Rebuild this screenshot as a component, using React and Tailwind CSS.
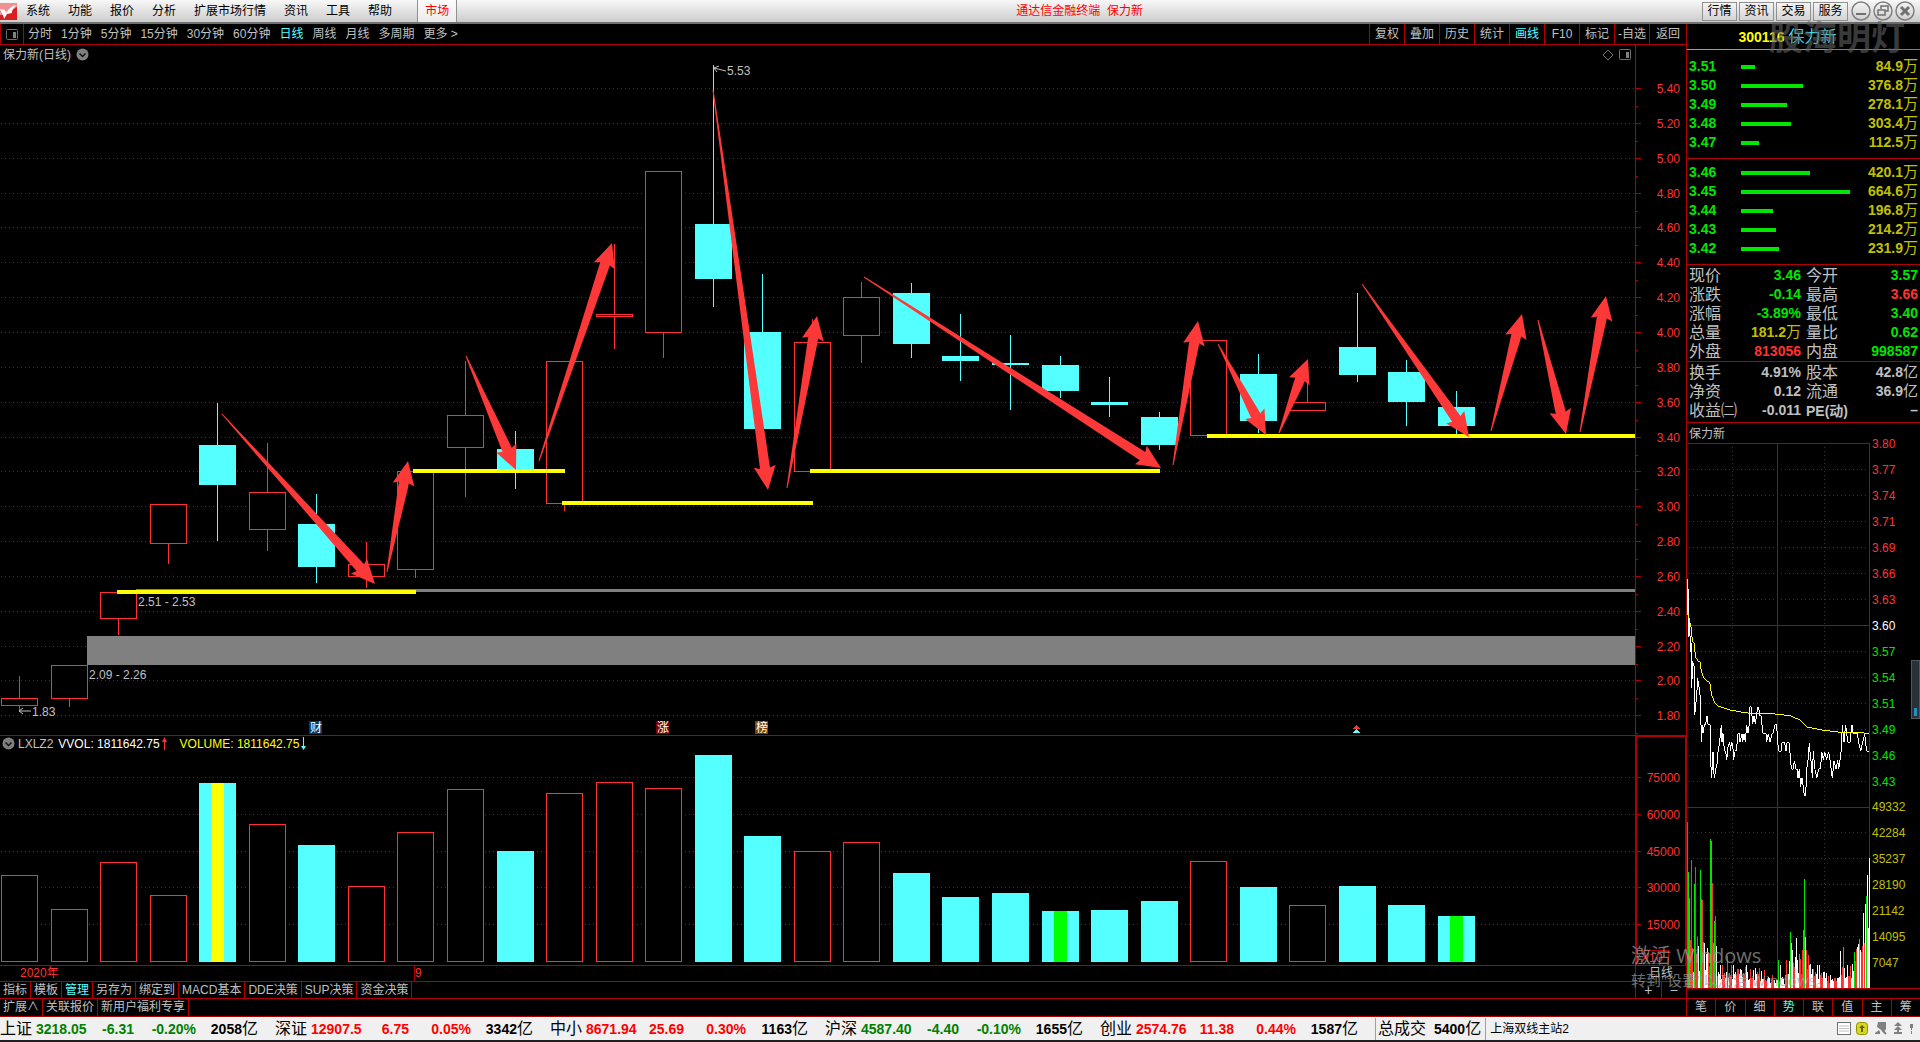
import clsx from 'clsx';

const RED = '#ff3232';
const LINE = '#b00000';
const CYAN = '#54ffff';

const menuItems = ['系统', '功能', '报价', '分析', '扩展市场行情', '资讯', '工具', '帮助'];
const periods = ['分时', '1分钟', '5分钟', '15分钟', '30分钟', '60分钟', '日线', '周线', '月线', '多周期', '更多 >'];
const chartTools = ['复权', '叠加', '历史', '统计', '画线', 'F10', '标记', '-自选', '返回'];
const windowLinks = ['行情', '资讯', '交易', '服务'];
const sideTabs = ['笔', '价', '细', '势', '联', '值', '主', '筹'];
const indicatorTabs = ['指标', '模板', '管理', '另存为', '绑定到', 'MACD基本', 'DDE决策', 'SUP决策', '资金决策'];
const extraTabs = ['扩展∧', '关联报价', '新用户福利专享'];

const asks = [
  ['3.51', 84.9],
  ['3.50', 376.8],
  ['3.49', 278.1],
  ['3.48', 303.4],
  ['3.47', 112.5],
];
const bids = [
  ['3.46', 420.1],
  ['3.45', 664.6],
  ['3.44', 196.8],
  ['3.43', 214.2],
  ['3.42', 231.9],
];

const GREEN_TXT = 'text-[#00e600]';
const RED_TXT = 'text-[#ff3232]';
const GOLD_TXT = 'text-[#c0c000]';
const GREY_TXT = 'text-[#c0c0c0]';

const quoteRows = [
  ['现价', '3.46', GREEN_TXT, '今开', '3.57', GREEN_TXT],
  ['涨跌', '-0.14', GREEN_TXT, '最高', '3.66', RED_TXT],
  ['涨幅', '-3.89%', GREEN_TXT, '最低', '3.40', GREEN_TXT],
  ['总量', '181.2万', GOLD_TXT, '量比', '0.62', GREEN_TXT],
  ['外盘', '813056', RED_TXT, '内盘', '998587', GREEN_TXT],
];
const financeRows = [
  ['换手', '4.91%', GREY_TXT, '股本', '42.8亿', GREY_TXT],
  ['净资', '0.12', GREY_TXT, '流通', '36.9亿', GREY_TXT],
  ['收益㈡', '-0.011', GREY_TXT, 'PE(动)', '–', GREY_TXT],
];

const indexes = [
  ['上证', '3218.05', '-6.31', '-0.20%', '2058', false],
  ['深证', '12907.5', '6.75', '0.05%', '3342', true],
  ['中小', '8671.94', '25.69', '0.30%', '1163', true],
  ['沪深', '4587.40', '-4.40', '-0.10%', '1655', false],
  ['创业', '2574.76', '11.38', '0.44%', '1587', true],
];

// [up, bodyTop, bodyBottom, high, low, volumeTop]
const candles = [
  [1, 698, 705, 676, 710, 875],
  [1, 665, 698, 665, 707, 909],
  [1, 592, 618, 592, 635, 862],
  [1, 504, 543, 504, 564, 895],
  [0, 445, 485, 403, 541, 783],
  [1, 492, 529, 443, 551, 824],
  [0, 524, 567, 494, 583, 845],
  [1, 564, 576, 542, 588, 886],
  [1, 471, 569, 471, 578, 832],
  [1, 415, 447, 361, 497, 789],
  [0, 449, 471, 431, 489, 851],
  [1, 361, 503, 361, 511, 793],
  [1, 314, 316, 244, 349, 782],
  [1, 171, 332, 171, 358, 788],
  [0, 224, 279, 65, 307, 755],
  [0, 332, 429, 274, 429, 836],
  [1, 342, 471, 319, 471, 851],
  [1, 297, 335, 282, 363, 842],
  [0, 293, 344, 283, 358, 873],
  [0, 356, 361, 314, 381, 897],
  [0, 363, 365, 335, 410, 893],
  [0, 365, 391, 356, 398, 911],
  [0, 402, 405, 377, 417, 910],
  [0, 417, 445, 412, 450, 901],
  [1, 340, 435, 340, 435, 861],
  [0, 374, 421, 354, 433, 887],
  [1, 402, 410, 380, 410, 905],
  [0, 347, 375, 293, 382, 886],
  [0, 372, 402, 360, 426, 905],
  [0, 407, 426, 391, 434, 916],
];
const candleX = (i) => Math.round(19 + i * 49.55);

const volumeMarks = { 4: '#ffff00', 21: '#00ff00', 29: '#00ff00' };

const supportLines = [
  [117, 416, 592],
  [413, 565, 471],
  [562, 813, 503],
  [810, 1160, 471],
  [1207, 1635, 436],
];

const arrows = [
  [222, 414, 375, 584],
  [387, 572, 408, 461],
  [466, 356, 516, 470],
  [539, 461, 612, 243],
  [713, 90, 768, 490],
  [787, 488, 817, 316],
  [864, 277, 1161, 468],
  [1173, 465, 1198, 321],
  [1218, 344, 1266, 435],
  [1279, 433, 1308, 359],
  [1362, 284, 1469, 437],
  [1491, 431, 1522, 314],
  [1538, 320, 1566, 434],
  [1580, 432, 1606, 296],
];

// thin tail that widens into a barbed head
const arrowPoints = ([x1, y1, x2, y2]) => {
  const len = Math.hypot(x2 - x1, y2 - y1);
  const ux = (x2 - x1) / len;
  const uy = (y2 - y1) / len;
  const at = (back, side) => `${(x2 - ux * back - uy * side).toFixed(1)},${(y2 - uy * back + ux * side).toFixed(1)}`;
  return [at(len, 0.5), at(26, 5), at(22, 5), at(24, 11), at(0, 0), at(24, -11), at(22, -5), at(26, -5), at(len, -0.5)].join(' ');
};

const avgLine =
  '142,545 145,550 148,570 153,590 157,632 163,640 166,680 172,690 180,697 184,725 190,740 197,750 207,757 210,762 215,795 225,820 235,829 270,840 320,849 395,851 450,857 480,870 500,891 545,900 600,907 650,908 688,910';
const priceLine =
  '142,448 142,555 145,478 146,620 149,570 151,665 154,640 155,775 158,692 160,705 163,710 164,856 167,825 170,800 173,745 176,770 179,775 182,830 184,936 187,885 189,910 193,885 197,883 201,857 204,882 210,884 213,1010 215,1045 218,970 220,965 221,1018 223,1045 227,1018 232,1000 234,965 239,936 244,885 246,936 249,910 251,940 254,963 257,965 260,990 264,950 269,936 272,962 274,938 278,940 281,990 284,965 290,960 293,912 300,912 300,936 306,912 308,936 312,912 316,936 320,885 324,910 328,882 330,830 334,830 338,882 342,858 346,882 350,856 353,830 356,832 360,858 364,858 368,910 378,912 380,936 385,912 390,936 396,912 400,908 404,885 410,884 413,936 416,964 424,964 426,938 434,938 438,964 440,938 448,938 452,1000 455,1018 460,1018 463,992 468,1018 472,1018 474,1044 478,1018 482,1070 486,1044 490,1070 493,1098 497,1098 500,1020 504,992 508,938 510,964 514,1000 517,1044 520,962 524,1018 526,1020 530,1045 536,1018 542,1015 545,965 550,990 554,965 560,990 566,965 570,990 577,1044 582,992 588,1018 593,990 596,1018 600,990 604,960 607,884 612,936 617,884 620,910 624,936 630,938 636,884 640,912 648,912 652,910 656,936 662,964 668,938 674,912 680,964 687,964';

// minute volume: [x, height, colour]
const spikes = [
  [0, 166, 'r'], [1, 116, 'g'], [2, 90, 'g'], [3, 48, 'r'], [4, 128, 'r'], [5, 40, 'r'], [7, 104, 'g'], [8, 121, 'r'],
  [10, 51, 'r'], [13, 118, 'g'], [14, 89, 'g'], [15, 88, 'r'], [16, 46, 'g'], [17, 45, 'w'], [23, 149, 'g'], [24, 147, 'g'],
  [25, 105, 'r'], [26, 45, 'g'], [27, 67, 'g'], [28, 72, 'r'], [29, 42, 'w'], [40, 32, 'r'], [91, 28, 'g'], [93, 23, 'w'],
  [103, 56, 'g'], [104, 45, 'w'], [105, 38, 'w'], [109, 50, 'w'], [112, 34, 'g'], [115, 38, 'r'], [116, 58, 'g'], [117, 109, 'g'],
  [118, 51, 'w'], [119, 38, 'r'], [121, 33, 'r'], [153, 37, 'w'], [156, 41, 'g'], [167, 36, 'g'], [170, 41, 'w'], [171, 44, 'w'],
  [172, 49, 'g'], [173, 38, 'w'], [174, 36, 'r'], [175, 42, 'r'], [176, 75, 'w'], [177, 45, 'r'], [178, 84, 'w'], [179, 92, 'g'],
  [180, 113, 'w'], [181, 60, 'w'], [182, 130, 'w'],
];
const barColors = { r: RED, g: '#00e600', w: '#ffffff' };
const minuteBars = Array.from({ length: 183 }, (_, x) => {
  const base = x < 30 ? 38 : x < 60 ? 22 : x < 80 ? 18 : x < 98 ? 11 : x < 124 ? 28 : x < 140 ? 22 : x < 152 ? 12 : x < 168 ? 22 : 36;
  const noise = ((x * 73 + x * x * 31) % 97) / 97;
  return [x, Math.round(base * (0.4 + noise * 0.75)), 'rwrwgwr'[(x * 5 + x * x) % 7]];
});
spikes.forEach((s) => {
  minuteBars[s[0]] = s;
});

const prices = Array.from({ length: 19 }, (_, i) => (5.4 - i * 0.2).toFixed(2));
const miniPrices = ['3.80', '3.77', '3.74', '3.71', '3.69', '3.66', '3.63', '3.60', '3.57', '3.54', '3.51', '3.49', '3.46', '3.43'];
const miniVolumes = ['49332', '42284', '35237', '28190', '21142', '14095', '7047'];

const DotLine = ({ x1, y1, x2, y2 }) => (
  <line x1={x1} y1={y1 + 0.5} x2={x2} y2={y2 + 0.5} stroke={LINE} strokeDasharray="1 3" />
);

const Badge = ({ x, fill, children }) => (
  <g>
    <rect x={x} y="721" width="13" height="13" fill={fill} />
    <text x={x + 1} y="732" fontSize="12" fill="#ffffff">{children}</text>
  </g>
);

const KLineChart = () => (
  <svg viewBox="0 64 1686 671" className="block w-full" shapeRendering="crispEdges">
    {prices.map((p, i) => {
      const y = Math.round(88 + i * 34.85);
      return (
        <g key={p}>
          <DotLine x1={1} y1={y} x2={1635} y2={y} />
          <path d={`M1635 ${y + 0.5}h6M1635 ${y + 18}h3`} stroke={LINE} />
          <text x="1680" y={y + 5} textAnchor="end" fontSize="12" fill={RED}>{p}</text>
        </g>
      );
    })}
    <rect x="87" y="636" width="1548" height="29" fill="#808080" />
    <rect x="136" y="589" width="1499" height="3" fill="#808080" />
    <line x1="1635.5" y1="64" x2="1635.5" y2="735" stroke={LINE} />

    {candles.map(([up, top, bottom, high, low], i) => {
      const x = candleX(i);
      return up ? (
        <g key={i} stroke={RED} fill="#000000">
          <path d={`M${x + 0.5} ${high}V${top}M${x + 0.5} ${bottom}V${low}`} />
          <rect x={x - 17.5} y={top + 0.5} width="36" height={bottom - top} />
        </g>
      ) : (
        <g key={i} fill={CYAN}>
          <rect x={x} y={high} width="1" height={low - high} />
          <rect x={x - 18} y={top} width="37" height={bottom - top} />
        </g>
      );
    })}

    {supportLines.map(([x1, x2, y]) => (
      <rect key={x1} x={x1} y={y - 2} width={x2 - x1} height="4" fill="#ffff00" />
    ))}
    <g fill="#fc3838" shapeRendering="geometricPrecision">
      {arrows.map((a) => (
        <polygon key={a[0]} points={arrowPoints(a)} />
      ))}
    </g>

    <g fill="#c0c0c0" fontSize="12">
      <text x="138" y="606">2.51 - 2.53</text>
      <text x="89" y="679">2.09 - 2.26</text>
      <text x="32" y="716">1.83</text>
      <text x="727" y="75">5.53</text>
    </g>
    <path d="M19 711h12M19 711l4 -3M19 711l4 3M714 68l12 3M714 68l5 -2M714 68l3 4" stroke="#c0c0c0" fill="none" shapeRendering="auto" />

    <Badge x={309} fill="#003a70">财</Badge>
    <Badge x={656} fill="#800000">涨</Badge>
    <Badge x={755} fill="#804000">榜</Badge>
    <path d="M1356.500 725l4 4h-8z" fill={RED} />
    <path d="M1356.500 729l4 4h-8z" fill={CYAN} />
  </svg>
);

const VolumeChart = () => (
  <svg viewBox="0 753 1686 212" className="block w-full" shapeRendering="crispEdges">
    {['75000', '60000', '45000', '30000', '15000'].map((v, i) => {
      const y = Math.round(777 + i * 36.8);
      return (
        <g key={v}>
          <DotLine x1={1} y1={y} x2={1635} y2={y} />
          <path d={`M1635 ${y + 0.5}h6M1635 ${y + 19}h3`} stroke={LINE} />
          <text x="1680" y={y + 5} textAnchor="end" fontSize="12" fill={RED}>{v}</text>
        </g>
      );
    })}
    <rect x="1635" y="753" width="2" height="212" fill={LINE} />
    <rect x="1685" y="753" width="1" height="212" fill={LINE} />
    {candles.map(([up, , , , , top], i) => {
      const x = candleX(i);
      return (
        <g key={i}>
          {up ? (
            <rect x={x - 17.5} y={top + 0.5} width="36" height={961 - top} stroke={RED} fill="#000000" />
          ) : (
            <rect x={x - 18} y={top} width="37" height={962 - top} fill={CYAN} />
          )}
          {volumeMarks[i] && <rect x={x - 6} y={top} width="13" height={962 - top} fill={volumeMarks[i]} />}
        </g>
      );
    })}
    <rect x="1637.5" y="950.5" width="31" height="13" fill="none" stroke={LINE} />
    <text x="1641" y="962" fontSize="12" fill={RED}>X10</text>
  </svg>
);

const MinuteChart = () => (
  <svg viewBox="1687 443 233 555" className="block w-full overflow-visible" shapeRendering="crispEdges">
    {Array.from({ length: 20 }, (_, i) => 469 + i * 26 - (i > 13 ? 1 : 0)).map((y) => (
      <DotLine key={y} x1={1689} y1={y} x2={1869} y2={y} />
    ))}
    <DotLine x1={1732.5} y1={446} x2={1732.5} y2={988} />
    <DotLine x1={1824.5} y1={446} x2={1824.5} y2={988} />
    <path d="M1687 443.500H1869.500V988M1777.500 443V988M1687 625.500H1869M1687 807.500H1869M1687 988.500H1920" fill="none" stroke={LINE} />
    {miniPrices.map((p, i) => (
      <text key={p} x="1872" y={448 + i * 26} fontSize="12" fill={i < 7 ? RED : i === 7 ? '#ffffff' : '#00e600'}>{p}</text>
    ))}
    {miniVolumes.map((v, i) => (
      <text key={v} x="1872" y={811 + i * 26} fontSize="12" fill="#c0c000">{v}</text>
    ))}
    {minuteBars.map(([x, h, c]) => (
      <rect key={x} x={1687 + x} y={988 - h} width="1" height={h} fill={barColors[c]} />
    ))}
    <g transform="translate(1640 430) scale(0.3333)" fill="none" strokeWidth="3">
      <polyline points={priceLine} stroke="#ffffff" />
      <polyline points={avgLine} stroke="#ffff00" />
    </g>
  </svg>
);

const PaneIcon = () => (
  <svg viewBox="0 0 13 13" className="h-[13px] w-[13px]" fill="none" stroke="#707070">
    <rect x="0.5" y="1.500" width="11" height="10" rx="1" />
    <rect x="7" y="4" width="3" height="6" fill="#808080" stroke="none" />
  </svg>
);

const Chevron = () => (
  <svg viewBox="0 0 13 13" className="h-[13px] w-[13px]">
    <circle cx="6.500" cy="6.500" r="6" fill="#808080" />
    <path d="M3.500 5.500l3 3 3-3" fill="none" stroke="#101010" strokeWidth="1.500" />
  </svg>
);

const WindowButton = ({ label, children }) => (
  <button aria-label={label} className="h-[22px] w-[22px]">
    <svg viewBox="0 0 22 22" className="h-[22px] w-[22px]" fill="none" stroke="#707070" strokeWidth="2">
      <circle cx="11" cy="11" r="9" strokeWidth="1.500" stroke="#808080" />
      {children}
    </svg>
  </button>
);

const TitleBar = () => (
  <header className="flex h-6 items-center border-b-2 border-[#707070] bg-linear-to-b from-[#f8f8f8] to-[#cccccc] text-black">
    <svg viewBox="0 0 17 17" className="h-[17px] w-[17px] shrink-0">
      <rect width="17" height="17" fill="#d82020" />
      <path d="M0 0h17v4L4 12 0 12z" fill="#f09090" />
      <path d="M0 6l5 1 1 3C8 7 11 3 16 2c-2 3-4 4-4 8l-5 1-3 5C4 13 2 11 0 6z" fill="#ffffff" />
    </svg>
    <nav className="flex h-full items-center">
      {menuItems.map((m) => (
        <button key={m} className="px-[9px]">{m}</button>
      ))}
      <button className="ml-4 h-full border-x border-[#909090] bg-white/60 px-[7px] text-[#ff0000]">市场</button>
    </nav>
    <h1 className="flex-1 text-center text-[#ff0000]">通达信金融终端&nbsp; 保力新</h1>
    <div className="flex items-center gap-[2px] pr-1">
      {windowLinks.map((w) => (
        <button key={w} className="h-[19px] w-[35px] border border-[#909090] bg-linear-to-b from-[#f4f4f4] to-[#d4d4d4] leading-[17px]">{w}</button>
      ))}
      <div className="flex">
        <WindowButton label="最小化">
          <path d="M6 14h10" />
        </WindowButton>
        <WindowButton label="还原">
          <path d="M9 9V6h7v5h-3M6 10h7v5H6z" strokeWidth="1.500" />
        </WindowButton>
        <WindowButton label="关闭">
          <path d="M7 7l8 8M15 7l-8 8" strokeWidth="3" />
        </WindowButton>
      </div>
    </div>
  </header>
);

const OrderRows = ({ rows }) => (
  <table className="w-full table-fixed text-[14px] leading-[19px] font-bold">
    <tbody>
      {rows.map(([price, amount]) => (
        <tr key={price} className="h-[19px]">
          <td className="w-[54px] p-0 pl-[2px] text-[#00e600]">{price}</td>
          <td className="p-0">
            <div className="h-1 bg-[#00e600]" style={{ width: Math.round(amount * 0.164) }} />
          </td>
          <td className="w-[60px] p-0 pr-[2px] text-right text-[#c0c000]">
            {amount}
            <span className="text-[15px] leading-none font-normal">万</span>
          </td>
        </tr>
      ))}
    </tbody>
  </table>
);

const Amount = ({ value }) => {
  const unit = value.match(/[万亿]$/);
  if (!unit) return value;
  return (
    <>
      {value.slice(0, -1)}
      <span className="text-[15px] leading-none font-normal">{unit[0]}</span>
    </>
  );
};

const InfoRows = ({ rows }) => (
  <table className="w-full table-fixed text-[14px] leading-[19px] font-bold whitespace-nowrap">
    <tbody>
      {rows.map(([l1, v1, c1, l2, v2, c2]) => (
        <tr key={l1} className="h-[19px]">
          <th className="w-[50px] p-0 pl-[2px] text-left text-[16px] leading-[18px] font-normal text-[#c0c0c0]">{l1}</th>
          <td className={clsx('w-[66px] p-0 pr-[2px] text-right', c1)}><Amount value={v1} /></td>
          <th
            className={clsx(
              'w-[50px] p-0 pl-[3px] text-left leading-[18px] text-[#c0c0c0]',
              l2.startsWith('PE') ? 'text-[14px] font-bold' : 'text-[16px] font-normal'
            )}
          >
            {l2}
          </th>
          <td className={clsx('p-0 pr-[2px] text-right', c2)}><Amount value={v2} /></td>
        </tr>
      ))}
    </tbody>
  </table>
);

const SidePanel = () => (
  <aside className="flex w-[234px] shrink-0 flex-col border-l border-[#b00000]">
    <div className="flex h-[25px] items-center justify-center gap-1 pr-[32px] text-[16px]">
      <b className="text-[14px] text-[#ffff00]">300116</b>
      <span className="text-[#40d8e8]">保力新</span>
    </div>
    <div className="flex h-px">
      <div className="flex-3 bg-[#e09030]" />
      <div className="flex-2 bg-[#4090d0]" />
    </div>
    <div className="pt-[7px] pb-[6px]"><OrderRows rows={asks} /></div>
    <div className="border-t border-[#b00000] pt-1 pb-[6px]"><OrderRows rows={bids} /></div>
    <div className="border-t border-[#b00000] pt-px"><InfoRows rows={quoteRows} /></div>
    <div className="border-t border-[#b00000] pt-px pb-[2px]"><InfoRows rows={financeRows} /></div>
    <div className="h-[21px] border-t border-[#b00000] pt-px pl-[2px] leading-[20px] text-[#c0c0c0]">保力新</div>
    <MinuteChart />
    <nav className="flex h-[19px] border-y border-[#b00000] text-[#c0c0c0]">
      {sideTabs.map((t) => (
        <button key={t} className={clsx('flex-1 border-r border-[#b00000] leading-[17px] last:border-r-0', t === '势' && 'text-[#54ffff]')}>
          {t}
        </button>
      ))}
    </nav>
  </aside>
);

const ChartColumn = () => (
  <main className="min-w-0 flex-1">
    <div className="flex h-[21px] items-stretch justify-between border-b border-[#b00000] text-[#c0c0c0]">
      <div className="flex items-center gap-[9px]">
        <button aria-label="侧栏" className="-mr-[5px] flex h-full w-6 items-center justify-center border-x border-[#b00000]">
          <PaneIcon />
        </button>
        {periods.map((p) => (
          <button key={p} className={clsx(p === '日线' && 'text-[#54ffff]')}>{p}</button>
        ))}
      </div>
      <div className="flex">
        {chartTools.map((t) => (
          <button key={t} className={clsx('w-[35px] border-l border-[#b00000] last:w-[37px]', t === '画线' && 'text-[#54ffff]')}>{t}</button>
        ))}
      </div>
    </div>

    <div className="flex h-[19px]">
      <div className="flex flex-1 items-center gap-[5px] pl-[3px] text-[#c0c0c0]">
        <span>保力新(日线)</span>
        <Chevron />
        <svg viewBox="0 0 12 12" className="ml-auto h-3 w-3" fill="none" stroke="#707070">
          <path d="M6 1l5 5-5 5-5-5z" />
        </svg>
        <div className="pr-[3px]"><PaneIcon /></div>
      </div>
      <div className="w-[51px] border-l border-[#b00000]" />
    </div>
    <KLineChart />

    <div className="flex h-[18px] border-t border-[#b00000]">
      <div className="flex flex-1 items-center pb-[2px] pl-[2px] text-[#c0c0c0]">
        <Chevron />
        <span className="pl-[3px]">LXLZ2</span>
        <span className="pl-[5px] text-white">VVOL: 1811642.75</span>
        <svg viewBox="0 0 7 13" className="ml-px h-[13px] w-[7px]" fill={RED}><path d="M3 13V5H1l2.500-5L6 5H4v8z" /></svg>
        <span className="pl-3 text-[#ffff00]">VOLUME: 1811642.75</span>
        <svg viewBox="0 0 7 13" className="ml-px h-[13px] w-[7px]" fill={CYAN}><path d="M3 0v9H1l2.500 4L6 9H4V0z" /></svg>
      </div>
      <div className="w-[51px] border-t border-r border-l-2 border-[#b00000]" />
    </div>
    <VolumeChart />

    <div className="flex">
      <div className="flex-1">
        <div className="flex h-4 border-t border-[#b00000] leading-[15px] text-[#ff3232]">
          <span className="w-[414px] pl-5">2020年</span>
          <span className="flex-1 border-l border-[#b00000]">9</span>
        </div>
        <nav className="flex h-[17px] border-t border-[#b00000] leading-[16px] text-[#c0c0c0]">
          {indicatorTabs.map((t) => (
            <button key={t} className={clsx('border-r border-[#b00000] px-[3px]', t === '管理' && 'text-[#54ffff]')}>{t}</button>
          ))}
        </nav>
      </div>
      <div className="w-[51px] border-l border-[#b00000] text-[#c0c0c0]">
        <button className="block h-4 w-full border-t border-[#b00000] leading-[15px]">日线</button>
        <div className="flex h-[17px] border-t border-[#b00000] text-[14px] leading-[15px]">
          <button className="flex-1 border-r border-[#b00000]">+</button>
          <button className="flex-1">−</button>
        </div>
      </div>
    </div>
    <nav className="flex h-[19px] border-y border-[#b00000] leading-[17px] text-[#c0c0c0]">
      {extraTabs.map((t) => (
        <button key={t} className="border-r border-[#b00000] px-[3px]">{t}</button>
      ))}
    </nav>
  </main>
);

const StatusBar = () => (
  <footer className="flex h-[25px] items-center border-t border-b-2 border-t-white border-b-[#202020] bg-[#f0f0f0] text-[14px] font-bold whitespace-nowrap text-black">
    {indexes.map(([name, value, change, pct, amount, up]) => (
      <div key={name} className={clsx('flex w-[275px] shrink-0 items-center', up ? 'text-[#ff0000]' : 'text-[#008000]')}>
        <span className="w-9 text-[16px] font-normal text-black">{name}</span>
        <span>{value}</span>
        <span className="ml-auto w-[46px] text-right">{change}</span>
        <span className="w-[62px] text-right">{pct}</span>
        <span className="w-[62px] text-right text-black">
          {amount}
          <span className="text-[16px] leading-none font-normal">亿</span>
        </span>
        <span className="w-[17px]" />
      </div>
    ))}
    <div className="flex h-full items-center gap-2 border-l border-[#a0a0a0] pr-1 pl-[2px]">
      <span className="text-[16px] font-normal">总成交</span>
      <span>
        5400<span className="text-[16px] leading-none font-normal">亿</span>
      </span>
    </div>
    <div className="flex h-full flex-1 items-center border-l border-[#a0a0a0] pl-1 text-[12px] font-normal">上海双线主站2</div>
    <svg viewBox="0 0 78 16" className="mr-[6px] h-4 w-[78px]">
      <rect x="1.500" y="1.500" width="13" height="12" fill="#ffffff" stroke="#707070" />
      <path d="M3 5h10M3 7.500h10M3 10h10" stroke="#c0c0c0" />
      <rect x="20.500" y="1.500" width="11" height="12" rx="3" fill="#d8d820" stroke="#909000" />
      <path d="M26 4l3 3h-2v4h-2V7h-2z" fill="#606000" />
      <path d="M42 1h8v7l-2 3-7-5zM39 12l4-3 1 2v2h-5z" fill="#808080" />
      <path d="M46 9l4 4" stroke="#808080" strokeWidth="2" />
      <path d="M62 1l4 4h-8zM62 5l4 4h-8zM61 8h2v3h3v2h-8v-2h3z" fill="#808080" />
      <path d="M74 3h3v4h-1v2h-1V7h-1zM75 10h1v3h-1z" fill="#808080" />
    </svg>
  </footer>
);

export default function App() {
  return (
    <div className="relative min-h-screen overflow-hidden bg-black font-['Liberation_Sans','Noto_Sans_CJK_SC',sans-serif] text-[12px] leading-4">
      <TitleBar />
      <div className="flex">
        <ChartColumn />
        <SidePanel />
      </div>
      <StatusBar />

      {/* overlays */}
      <div className="pointer-events-none absolute top-[16px] right-[15px] text-[34px] leading-[44px] font-bold text-[#606060]/60">股海明灯</div>
      <div className="pointer-events-none absolute right-[129px] bottom-[51px] w-[160px] whitespace-nowrap text-[#a0a0a0]/70">
        <p className="font-['Open_Sans','Noto_Sans_CJK_SC',sans-serif] text-[20px] leading-[26px]">激活 Windows</p>
        <p className="font-['Open_Sans','Noto_Sans_CJK_SC',sans-serif] text-[15px] leading-[22px]">转到"设置"以激活 Windows。</p>
      </div>
      <div className="absolute top-[660px] right-0 flex h-[59px] w-[9px] flex-col justify-end border border-[#505860] bg-[#283038] p-[2px]">
        <div className="h-2 bg-[#2090c0]" />
      </div>
    </div>
  );
}
